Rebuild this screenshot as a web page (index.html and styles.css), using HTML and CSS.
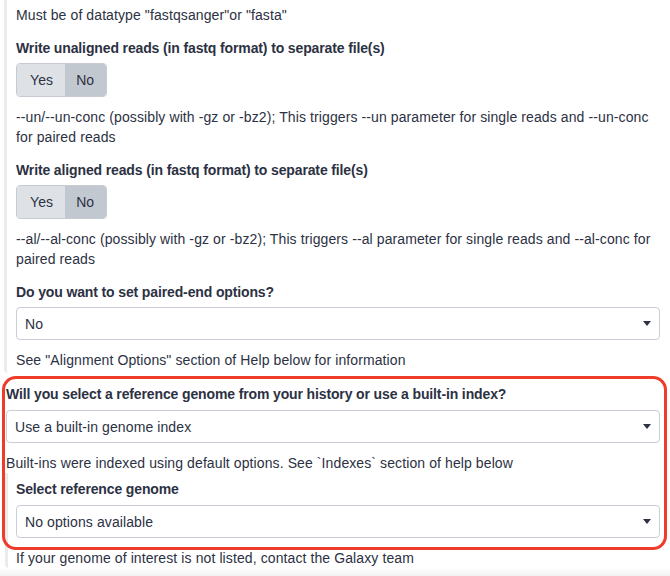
FILE: index.html
```html
<!DOCTYPE html>
<html>
<head>
<meta charset="utf-8">
<link rel="stylesheet" href="styles.css">
</head>
<body>
<div class="page">
  <div class="section">
    <div class="help first">Must be of datatype "fastqsanger"or "fasta"</div>

    <div class="element">
      <div class="title">Write unaligned reads (in fastq format) to separate file(s)</div>
      <div class="toggle">
        <span class="opt">Yes</span><span class="opt active">No</span>
      </div>
      <div class="help">--un/--un-conc (possibly with -gz or -bz2); This triggers --un parameter for single reads and --un-conc for paired reads</div>
    </div>

    <div class="element">
      <div class="title">Write aligned reads (in fastq format) to separate file(s)</div>
      <div class="toggle">
        <span class="opt">Yes</span><span class="opt active">No</span>
      </div>
      <div class="help">--al/--al-conc (possibly with -gz or -bz2); This triggers --al parameter for single reads and --al-conc for paired reads</div>
    </div>

    <div class="element">
      <div class="title">Do you want to set paired-end options?</div>
      <div class="select"><span>No</span><i class="caret"></i></div>
      <div class="help">See "Alignment Options" section of Help below for information</div>
    </div>
  </div>

  <div class="conditional">
    <div class="title">Will you select a reference genome from your history or use a built-in index?</div>
    <div class="select"><span>Use a built-in genome index</span><i class="caret"></i></div>
    <div class="help">Built-ins were indexed using default options. See `Indexes` section of help below</div>

    <div class="section nested">
      <div class="title">Select reference genome</div>
      <div class="select"><span>No options available</span><i class="caret"></i></div>
      <div class="help">If your genome of interest is not listed, contact the Galaxy team</div>
    </div>
  </div>

  <div class="fade"></div>

  <div class="highlight"></div>
</div>
</body>
</html>
```

FILE: styles.css
```css
html, body {
  margin: 0;
  padding: 0;
  background: #ffffff;
}

body {
  font-family: "Liberation Sans", Arial, Helvetica, sans-serif;
  font-size: 14px;
  line-height: 20px;
  color: #2c3143;
  letter-spacing: 0.1px;
}

.page {
  position: relative;
  width: 670px;
  height: 576px;
  overflow: hidden;
}

.section {
  margin-left: 4px;
  margin-right: 10px;
  border-left: 3px solid #ebebeb;
  border-bottom-left-radius: 4px;
  padding-left: 9px;
  padding-top: 5px;
  padding-bottom: 3px;
}

.element {
  margin-top: 13px;
}

.title {
  font-weight: bold;
  letter-spacing: -0.13px;
  margin-bottom: 5px;
}

.help {
  margin-top: 10px;
}

.help.first {
  margin-top: 0;
}

.toggle {
  display: flex;
  width: max-content;
  border: 1px solid #c6cbd2;
  border-radius: 4px;
  overflow: hidden;
  height: 32px;
}

.opt {
  display: flex;
  align-items: center;
  padding: 0 12px 0 13px;
  background: #dee2e6;
}

.opt.active {
  background: #c2c8d0;
  padding: 0 12px 0 11px;
}

.select {
  display: flex;
  align-items: center;
  justify-content: space-between;
  height: 31px;
  border: 1px solid #c9cdd8;
  border-radius: 4px;
  padding: 0 8px 0 8px;
  background: #ffffff;
}

.caret {
  display: block;
  width: 0;
  height: 0;
  border-top: 5px solid #2c3143;
  border-left: 4px solid transparent;
  border-right: 4px solid transparent;
}

.conditional {
  margin-left: 6px;
  margin-right: 10px;
  margin-top: 11px;
}

.conditional > .title {
  margin-bottom: 6px;
}

.section.nested {
  margin-left: -1px;
  margin-right: 0;
  padding-left: 8px;
  padding-top: 6px;
  padding-bottom: 0;
}

.nested .title {
  margin-bottom: 6px;
}

.fade {
  height: 10px;
  background: linear-gradient(#ffffff, #eeeeee);
}

.highlight {
  position: absolute;
  left: 2px;
  top: 376px;
  width: 659px;
  height: 168px;
  border: 3px solid #ee3b2a;
  border-radius: 14px;
  pointer-events: none;
}
```
